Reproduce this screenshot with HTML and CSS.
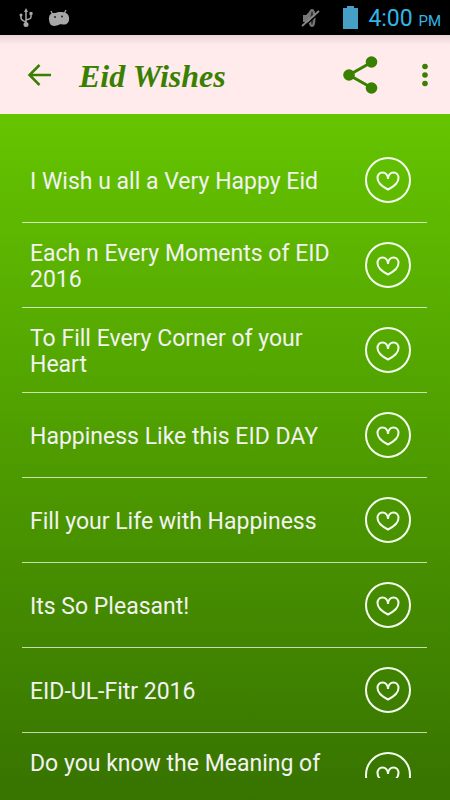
FILE: index.html
```
<!DOCTYPE html>
<html lang="en">
<head>
    <meta charset="UTF-8">
    <meta name="viewport" content="width=device-width, initial-scale=1">
    <title>Eid Wishes</title>
    <link rel="stylesheet" href="styles.css">
</head>
<body>
    <!-- shared heart icon -->
    <svg class="icon-defs" aria-hidden="true">
        <symbol id="heart" viewBox="0 0 46 46">
            <circle cx="23" cy="23" r="22"/>
            <path d="M23 22C22.800 18 20.500 15.500 17.500 15.500C14.300 15.500 12.500 18 12.500 21C12.500 26 17 29.500 23 32.500C29 29.500 33.500 26 33.500 21C33.500 18 31.700 15.500 28.500 15.500C25.500 15.500 23.200 18 23 22Z"/>
        </symbol>
    </svg>

    <div class="status-bar">
        <svg class="usb-icon" viewBox="0 0 14 20" aria-hidden="true">
            <path d="M7 2V16M2 7V10Q2 12 7 14M12 6V9Q12 11 7 12" fill="none" stroke="#a8a8a8" stroke-width="1.500"/>
            <path d="M7 0L9 4H5ZM10.500 4H13.500V7H10.500Z" fill="#a8a8a8"/>
            <circle cx="2" cy="7" r="1.500" fill="#a8a8a8"/>
            <circle cx="7" cy="16.500" r="2.500" fill="#a8a8a8"/>
        </svg>
        <svg class="debug-icon" viewBox="0 0 22 18" aria-hidden="true">
            <path d="M3 2L5 6M18 1L16 5" stroke="#a8a8a8" stroke-width="1.300"/>
            <path d="M1 11C0.500 6 3 3.500 7 4C10 2.500 15 2.500 18 4C21 5.500 21.500 9 21 11.500C20 15 17 16 14.500 15.500C12.500 15 12 15.500 9 16.500C4 18 1.500 16 1 11Z" fill="#a8a8a8"/>
            <circle cx="7" cy="8" r="1" fill="#222"/>
            <circle cx="14" cy="7.500" r="1" fill="#222"/>
        </svg>
        <svg class="mute-icon" viewBox="0 0 20 20" aria-hidden="true">
            <path d="M2 7H5L10 2V17L5 14H2Z" fill="#777"/>
            <ellipse cx="11" cy="10" rx="2.500" ry="8" fill="#333" stroke="#777" stroke-width="2"/>
            <path d="M2 19.500L19 4.500" stroke="#000" stroke-width="1.500"/>
            <path d="M1 18L18 3" stroke="#8a8a8a" stroke-width="1.700"/>
        </svg>
        <svg class="battery-icon" viewBox="0 0 15 23" aria-hidden="true">
            <path d="M4 0H11V2H15V23H0V2H4Z" fill="#459fc6"/>
        </svg>
        <span class="clock">4:00 <small>PM</small></span>
    </div>

    <header class="toolbar">
        <button class="back-button" aria-label="Back">
            <svg viewBox="0 0 24 24" width="24" height="24">
                <path d="M12.500 2L2.500 12L12.500 22M2.500 12H24" fill="none" stroke="#398000" stroke-width="2.500"/>
            </svg>
        </button>
        <h1>Eid Wishes</h1>
        <button class="share-button" aria-label="Share">
            <svg viewBox="0 0 36 38" width="36" height="38">
                <path d="M29 6L6 19L29 32" fill="none" stroke="#398000" stroke-width="3"/>
                <g fill="#398000">
                    <circle cx="28.500" cy="6" r="5.800"/>
                    <circle cx="6" cy="19" r="5.800"/>
                    <circle cx="28.500" cy="32" r="5.800"/>
                </g>
            </svg>
        </button>
        <button class="menu-button" aria-label="More options">
            <svg viewBox="0 0 6 24" width="6" height="24">
                <g fill="#398000">
                    <circle cx="3" cy="3.500" r="2.800"/>
                    <circle cx="3" cy="12" r="2.800"/>
                    <circle cx="3" cy="20.500" r="2.800"/>
                </g>
            </svg>
        </button>
    </header>

    <main>
        <ul class="wish-list">
            <li>
                <span class="wish">I Wish u all a Very Happy Eid</span>
                <button class="like" aria-label="Favourite"><svg><use href="#heart"/></svg></button>
            </li>
            <li>
                <span class="wish">Each n Every Moments of EID 2016</span>
                <button class="like" aria-label="Favourite"><svg><use href="#heart"/></svg></button>
            </li>
            <li>
                <span class="wish">To Fill Every Corner of your Heart</span>
                <button class="like" aria-label="Favourite"><svg><use href="#heart"/></svg></button>
            </li>
            <li>
                <span class="wish">Happiness Like this EID DAY</span>
                <button class="like" aria-label="Favourite"><svg><use href="#heart"/></svg></button>
            </li>
            <li>
                <span class="wish">Fill your Life with Happiness</span>
                <button class="like" aria-label="Favourite"><svg><use href="#heart"/></svg></button>
            </li>
            <li>
                <span class="wish">Its So Pleasant!</span>
                <button class="like" aria-label="Favourite"><svg><use href="#heart"/></svg></button>
            </li>
            <li>
                <span class="wish">EID-UL-Fitr 2016</span>
                <button class="like" aria-label="Favourite"><svg><use href="#heart"/></svg></button>
            </li>
            <li>
                <span class="wish two-lines">Do you know the Meaning of</span>
                <button class="like" aria-label="Favourite"><svg><use href="#heart"/></svg></button>
            </li>
        </ul>
    </main>
</body>
</html>
```

FILE: styles.css
```
:root {
    --green: #398000;
    --toolbar-bg: #ffeaec;
    --holo-blue: #33b5e5;
}

* {
    margin: 0;
    padding: 0;
    box-sizing: border-box;
}

body {
    font-family: Roboto, sans-serif;
    display: flex;
    flex-direction: column;
    height: 100vh;
    overflow: hidden;
}

button {
    display: flex;
    border: none;
    background: transparent;
    cursor: pointer;
}

.icon-defs {
    display: none;
}

.status-bar {
    display: flex;
    align-items: center;
    height: 35px;
    flex-shrink: 0;
    padding: 0 9px 0 19px;
    background: #000;
}

.usb-icon {
    width: 14px;
    height: 20px;
}

.debug-icon {
    width: 22px;
    height: 18px;
    margin-left: 15px;
}

.mute-icon {
    width: 20px;
    height: 20px;
    margin-left: auto;
}

.battery-icon {
    width: 15px;
    height: 23px;
    margin: 0 10px 0 22px;
}

.clock {
    padding-top: 2px;
    color: var(--holo-blue);
    font-size: 23px;
    white-space: nowrap;
}

.clock small {
    font-size: 15px;
}

.toolbar {
    display: flex;
    align-items: center;
    height: 79px;
    flex-shrink: 0;
    padding: 0 22px 0 27px;
    background: linear-gradient(#e8d5d7, var(--toolbar-bg) 10px);
}

.toolbar h1 {
    flex: 1;
    margin-left: 28px;
    padding-top: 4px;
    color: var(--green);
    font-family: "Liberation Serif", serif;
    font-size: 32px;
    font-style: italic;
    font-weight: 700;
}

.menu-button {
    margin-left: 43px;
}

main {
    flex: 1;
    min-height: 0;
    padding: 24px 23px 22px 22px;
    background: linear-gradient(#65c400, #377300);
}

.wish-list {
    height: 100%;
    overflow: hidden;
    list-style: none;
}

.wish-list li {
    display: flex;
    align-items: center;
    justify-content: space-between;
    gap: 24px;
    min-height: 85px;
    padding: 0 16px 0 8px;
    border-bottom: 1px solid rgba(255, 255, 255, 0.7);
}

.wish {
    padding-top: 3px;
    color: #f2f2f2;
    font-size: 23px;
    line-height: 26px;
}

.two-lines {
    min-height: 55px;
}

.like svg {
    width: 46px;
    height: 46px;
    fill: none;
    stroke: #f5fff0;
    stroke-width: 2;
}
```
